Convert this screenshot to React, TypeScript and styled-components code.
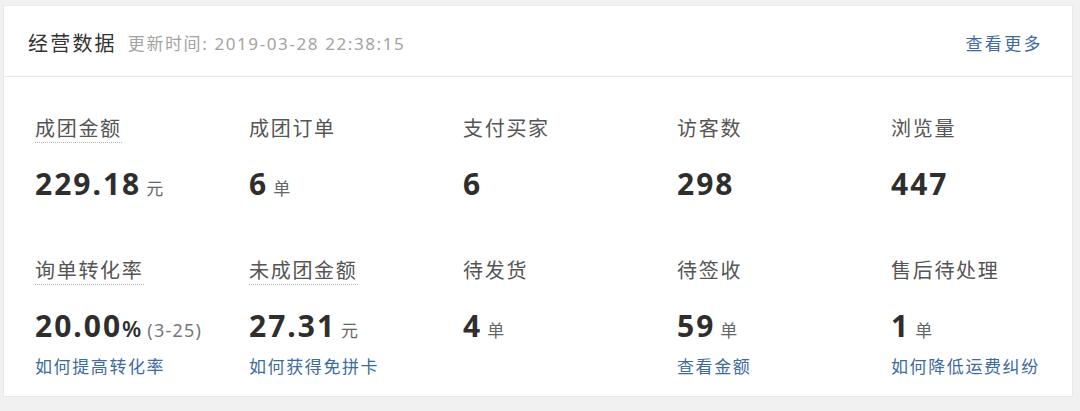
import React from "react";
import styled, { createGlobalStyle } from "styled-components";

const Global = createGlobalStyle`
  html, body { margin: 0; padding: 0; background: #f1f1f1; }
  body { font-family: "Noto Sans", "Noto Sans CJK SC", sans-serif; }
`;

const Page = styled.div`
  width: 1080px;
  height: 411px;
  padding: 5px 0 0 3px;
  box-sizing: border-box;
  background: #f1f1f1;
`;

const Card = styled.section`
  width: 1070px;
  height: 392px;
  box-sizing: border-box;
  background: #ffffff;
  border: 1px solid #e9e9e9;
  display: flex;
  flex-direction: column;
`;

const Header = styled.header`
  height: 71px;
  box-sizing: border-box;
  padding: 3px 29px 0 24px;
  border-bottom: 1px solid #e6e6e6;
  display: flex;
  align-items: center;
  justify-content: space-between;
`;

const TitleGroup = styled.div`
  display: flex;
  align-items: center;
  gap: 11px;
`;

const Title = styled.h2`
  margin: 0;
  font-size: 20px;
  letter-spacing: 2.2px;
  font-weight: 400;
  color: #333;
  font-family: "Noto Sans CJK SC", sans-serif;
`;

const Updated = styled.span`
  font-size: 17px;
  letter-spacing: 1.6px;
  color: #a3a3a3;
  font-family: "Noto Sans", "Noto Sans CJK SC", sans-serif;
`;

const MoreLink = styled.a`
  font-size: 17px;
  letter-spacing: 2.4px;
  color: #3d6aa0;
  text-decoration: none;
  font-family: "Noto Sans CJK SC", sans-serif;
`;

const Body = styled.div`
  padding: 39px 0 0 31px;
  display: grid;
  grid-template-columns: repeat(5, 214px);
  row-gap: 54px;
`;

const Cell = styled.div`
  display: flex;
  flex-direction: column;
  align-items: flex-start;
`;

const Label = styled.span<{ $hint?: boolean }>`
  display: inline-block;
  font-size: 20px;
  line-height: 24px;
  letter-spacing: 1.7px;
  color: #555;
  font-family: "Noto Sans CJK SC", sans-serif;
  padding-bottom: 2px;
  border-bottom: 1px dotted ${(p) => (p.$hint ? "#b5b5b5" : "transparent")};
`;

const ValueRow = styled.div`
  margin-top: 21px;
  height: 40px;
  display: flex;
  align-items: baseline;
  line-height: 40px;
`;

const Number = styled.span`
  font-family: "Noto Sans", sans-serif;
  font-weight: 700;
  font-size: 30px;
  letter-spacing: 2px;
  color: #2e2e2e;
`;

const Percent = styled.span`
  font-family: "Noto Sans", sans-serif;
  font-weight: 600;
  font-size: 22px;
  color: #2e2e2e;
`;

const Range = styled.span`
  font-family: "Noto Sans", sans-serif;
  font-size: 18px;
  letter-spacing: 1.2px;
  color: #777;
  margin-left: 6px;
`;

const Unit = styled.span`
  font-family: "Noto Sans CJK SC", sans-serif;
  font-size: 17px;
  color: #666;
  margin-left: 5px;
`;

const Help = styled.a`
  margin-top: 9px;
  font-size: 17px;
  line-height: 22px;
  letter-spacing: 1.6px;
  color: #3d6aa0;
  text-decoration: none;
  font-family: "Noto Sans CJK SC", sans-serif;
`;

type Metric = {
  label: string;
  hint?: boolean;
  value: string;
  unit?: string;
  percent?: boolean;
  range?: string;
  help?: string;
};

const metrics: Metric[] = [
  { label: "成团金额", hint: true, value: "229.18", unit: "元" },
  { label: "成团订单", value: "6", unit: "单" },
  { label: "支付买家", value: "6" },
  { label: "访客数", value: "298" },
  { label: "浏览量", value: "447" },
  { label: "询单转化率", hint: true, value: "20.00", percent: true, range: "(3-25)", help: "如何提高转化率" },
  { label: "未成团金额", hint: true, value: "27.31", unit: "元", help: "如何获得免拼卡" },
  { label: "待发货", value: "4", unit: "单" },
  { label: "待签收", value: "59", unit: "单", help: "查看金额" },
  { label: "售后待处理", value: "1", unit: "单", help: "如何降低运费纠纷" },
];

export default function App() {
  return (
    <Page>
      <Global />
      <Card>
        <Header>
          <TitleGroup>
            <Title>经营数据</Title>
            <Updated>更新时间: 2019-03-28 22:38:15</Updated>
          </TitleGroup>
          <MoreLink href="#">查看更多</MoreLink>
        </Header>
        <Body>
          {metrics.map((m) => (
            <Cell key={m.label}>
              <Label $hint={m.hint}>{m.label}</Label>
              <ValueRow>
                <Number>{m.value}</Number>
                {m.percent && <Percent>%</Percent>}
                {m.range && <Range>{m.range}</Range>}
                {m.unit && <Unit>{m.unit}</Unit>}
              </ValueRow>
              {m.help && <Help href="#">{m.help}</Help>}
            </Cell>
          ))}
        </Body>
      </Card>
    </Page>
  );
}
